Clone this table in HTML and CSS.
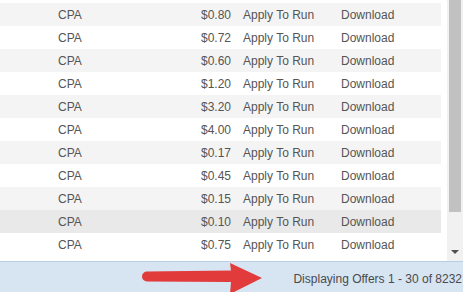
FILE: index.html
```html
<!DOCTYPE html>
<html>
<head>
<meta charset="utf-8">
<link rel="stylesheet" href="styles.css">
</head>
<body>
<div class="frame">
  <div class="grid-area">
    <div class="rows">
      <div class="top-spacer"></div>
      <div class="row alt"><span class="type">CPA</span><span class="price">$0.80</span><span class="apply">Apply To Run</span><span class="dl">Download</span></div>
      <div class="row"><span class="type">CPA</span><span class="price">$0.72</span><span class="apply">Apply To Run</span><span class="dl">Download</span></div>
      <div class="row alt"><span class="type">CPA</span><span class="price">$0.60</span><span class="apply">Apply To Run</span><span class="dl">Download</span></div>
      <div class="row"><span class="type">CPA</span><span class="price">$1.20</span><span class="apply">Apply To Run</span><span class="dl">Download</span></div>
      <div class="row alt"><span class="type">CPA</span><span class="price">$3.20</span><span class="apply">Apply To Run</span><span class="dl">Download</span></div>
      <div class="row"><span class="type">CPA</span><span class="price">$4.00</span><span class="apply">Apply To Run</span><span class="dl">Download</span></div>
      <div class="row alt"><span class="type">CPA</span><span class="price">$0.17</span><span class="apply">Apply To Run</span><span class="dl">Download</span></div>
      <div class="row"><span class="type">CPA</span><span class="price">$0.45</span><span class="apply">Apply To Run</span><span class="dl">Download</span></div>
      <div class="row alt"><span class="type">CPA</span><span class="price">$0.15</span><span class="apply">Apply To Run</span><span class="dl">Download</span></div>
      <div class="row hover"><span class="type">CPA</span><span class="price">$0.10</span><span class="apply">Apply To Run</span><span class="dl">Download</span></div>
      <div class="row"><span class="type">CPA</span><span class="price">$0.75</span><span class="apply">Apply To Run</span><span class="dl">Download</span></div>
    </div>
    <div class="scrollbar">
      <div class="thumb"></div>
      <div class="track"></div>
      <div class="arrow-down"></div>
    </div>
  </div>
  <div class="footer">
    <svg class="red-arrow" width="130" height="32" viewBox="0 0 130 32">
      <path d="M8 9.5 L92 8.5 L91 1 L123 16 L91 32 L92 20 L8 19.5 A5 5 0 0 1 8 9.5 Z" fill="#e23b3b"/>
    </svg>
    <span class="status">Displaying Offers 1 - 30 of 8232</span>
  </div>
</div>
</body>
</html>
```

FILE: styles.css
```css
html, body {
  margin: 0;
  padding: 0;
  background: #ffffff;
}
.frame {
  width: 463px;
  height: 292px;
  display: flex;
  flex-direction: column;
  font-family: "Liberation Sans", Arial, sans-serif;
  font-size: 12px;
  color: #555555;
  overflow: hidden;
}
.grid-area {
  height: 261px;
  flex-shrink: 0;
  display: flex;
}
.rows {
  width: 441px;
  display: flex;
  flex-direction: column;
}
.top-spacer {
  height: 3px;
}
.row {
  height: 23px;
  display: flex;
  align-items: center;
  flex-shrink: 0;
}
.row.alt {
  background: #f4f4f4;
}
.row.hover {
  background: #e9e9e9;
}
.type {
  margin-left: 58px;
  width: 120px;
}
.price {
  width: 53px;
  text-align: right;
}
.apply {
  margin-left: 12px;
  width: 98px;
}
.scrollbar {
  margin-left: 6px;
  width: 16px;
  background: #f1f1f1;
  display: flex;
  flex-direction: column;
  align-items: center;
}
.thumb {
  width: 12px;
  height: 212px;
  background: #c1c1c1;
}
.track {
  flex: 1;
}
.arrow-down {
  width: 0;
  height: 0;
  border-left: 4px solid transparent;
  border-right: 4px solid transparent;
  border-top: 4px solid #505050;
  margin-bottom: 7px;
}
.footer {
  flex: 1;
  background: #d7e4f2;
  border-top: 1px solid #b9cde3;
  display: flex;
  align-items: center;
  padding-top: 3px;
  position: relative;
}
.red-arrow {
  position: absolute;
  left: 139px;
  top: 0;
}
.status {
  margin-left: auto;
  margin-right: 1px;
  color: #4a4a4a;
}
```
